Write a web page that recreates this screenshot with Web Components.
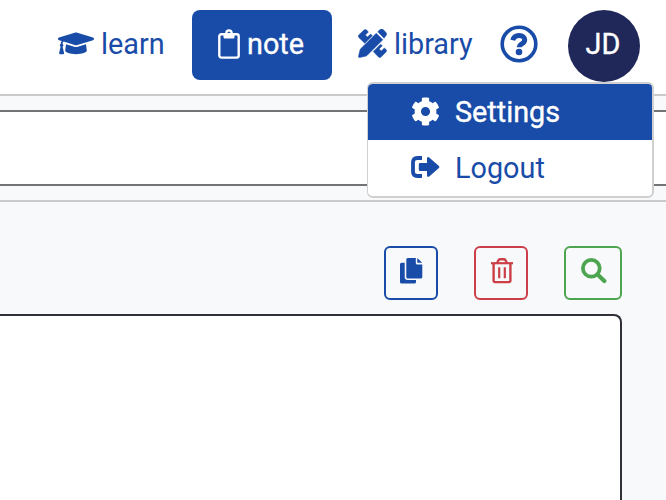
<!DOCTYPE html>
<html lang="en"><head><meta charset="utf-8"><title>Notes</title>
<style>html,body{margin:0;height:100%;overflow:hidden}body{font-family:Roboto,"Liberation Sans",sans-serif}</style>
</head><body>
<note-app></note-app>
<script>
const icons = {
  cap: ['0 0 640 512', '<path d="M622.34 153.2L343.4 67.5c-15.2-4.67-31.6-4.67-46.79 0L17.66 153.2c-23.54 7.23-23.54 38.36 0 45.59l48.63 14.94c-10.67 13.19-17.23 29.28-17.88 46.9C38.78 266.15 32 276.11 32 288c0 10.78 5.68 19.85 13.86 25.65L20.33 428.53C18.11 438.52 25.71 448 35.94 448h56.11c10.24 0 17.84-9.48 15.62-19.47L82.14 313.65C90.32 307.85 96 298.78 96 288c0-11.57-6.47-21.25-15.66-26.87.76-15.02 8.44-28.3 20.69-36.72L296.6 284.5c9.06 2.78 26.44 6.25 46.79 0l278.95-85.7c23.55-7.24 23.55-38.36 0-45.6zM352.79 315.09c-28.53 8.76-52.84 3.92-65.59 0l-145.02-44.55L128 384c0 35.35 85.96 64 192 64s192-28.65 192-64l-14.18-113.47-145.03 44.56z"/>'],
  clipboard: ['0 0 22 30', '<rect x="1.3" y="5.2" width="19.4" height="23.4" rx="2" fill="none" stroke="currentColor" stroke-width="2.4"/><path fill-rule="evenodd" d="M5.5 4H7.2a3.8 3.8 0 0 1 7.6 0h1.7v4.2q0 1.2-1.2 1.2H6.7q-1.2 0-1.2-1.2zM11 2.6a1.5 1.5 0 1 0 0 3A1.5 1.5 0 1 0 11 2.6z"/>'],
  tools: ['0 0 30 30', '<g stroke="currentColor" stroke-width=".5"><path d="M.8 6.3L6.1 1.1q1.4-1.2 2.8 0l1.9 1.9L7.6 6.2l2.2 2.2 3.2-3.2 1.8 1.8L7 14.7 .8 8.7q-1-1.2 0-2.4zM15.8 23.3l7.6-7.6 1.7 1.7-3.2 3.2 2.2 2.2 3.2-3.2 1.7 1.7q1.2 1.3 0 2.5l-5.2 5.2q-1.3 1.1-2.6 0z"/><path d="M18.9 4.3l6.8 6.8L9.8 27q-.8.8-2 1.1L1.7 29.5Q.2 29.7.5 28.3L1.9 22.3q.3-1.2 1.1-2zM20.4 2.9L22.8.6q1.6-1.3 3.2 0l3 3q1.3 1.6 0 3.2l-2.1 2.7z"/></g>'],
  help: ['0 0 38 38', '<circle cx="19" cy="19" r="16.8" fill="none" stroke="currentColor" stroke-width="3.6"/><path d="M12.9 15.2c.7-3.5 3-4.7 6.3-4.7 3.2 0 5.5 1.8 5.5 4.3 0 2.9-2.1 3.6-3.6 4.6-1.3.8-2 1.2-2 2.9" fill="none" stroke="currentColor" stroke-width="5"/><circle cx="19" cy="27" r="3.3"/>'],
  cog: ['0 0 512 512', '<path d="M487.4 315.7l-42.6-24.6c4.3-23.2 4.3-47 0-70.2l42.6-24.6c4.9-2.8 7.1-8.6 5.5-14-11.1-35.6-30-67.8-54.7-94.6-3.8-4.1-10-5.1-14.8-2.3L380.8 110c-17.9-15.4-38.5-27.3-60.8-35.1V25.8c0-5.6-3.9-10.5-9.4-11.7-36.7-8.2-74.3-7.8-109.2 0-5.5 1.2-9.4 6.1-9.4 11.7V75c-22.2 7.9-42.8 19.8-60.8 35.1L88.7 85.5c-4.9-2.8-11-1.9-14.8 2.3-24.7 26.7-43.6 58.9-54.7 94.6-1.7 5.4.6 11.2 5.5 14L67.3 221c-4.3 23.2-4.3 47 0 70.2l-42.6 24.6c-4.9 2.8-7.1 8.6-5.5 14 11.1 35.6 30 67.8 54.7 94.6 3.8 4.1 10 5.1 14.8 2.3l42.6-24.6c17.9 15.4 38.5 27.3 60.8 35.1v49.2c0 5.6 3.9 10.5 9.4 11.7 36.7 8.2 74.3 7.8 109.2 0 5.5-1.2 9.4-6.1 9.4-11.7v-49.2c22.2-7.9 42.8-19.8 60.8-35.1l42.6 24.6c4.9 2.8 11 1.9 14.8-2.3 24.7-26.7 43.6-58.9 54.7-94.6 1.5-5.5-.7-11.3-5.6-14.1zM256 336c-44.1 0-80-35.9-80-80s35.9-80 80-80 80 35.9 80 80-35.9 80-80 80z"/>'],
  logout: ['0 0 30 22', '<path d="M11 2H6.2Q2 2 2 6.2v9.6Q2 20 6.2 20H11" fill="none" stroke="currentColor" stroke-width="3.8"/><path d="M9 7h7V2.4Q16.3.2 18.2 1.4l9.7 8.5q1.2 1.1 0 2.2l-9.7 8.5q-1.9 1.2-2.2-1V15H9q-1.2 0-1.2-1.2V8.2Q7.8 7 9 7z"/>'],
  copy: ['0 0 23 26', '<path d="M1.5 4.8h3.2v14.3q0 2.9 2.9 2.9H16v1.9q0 1.6-1.6 1.6H1.6Q0 25.5 0 23.9V6.3q0-1.5 1.5-1.5zM7.8 0h8v5q0 1.5 1.5 1.5h5v12.6q0 1.5-1.5 1.5h-13q-1.5 0-1.5-1.5V1.5Q6.3 0 7.8 0zM17.3 0l4.9 4.8h-4.9z"/>'],
  trash: ['0 0 22 26', '<g fill="none" stroke="currentColor"><path d="M0 5.2h22" stroke-width="2.2"/><path d="M2.6 6v16.6q0 1.5 1.5 1.5h13.8q1.5 0 1.5-1.5V6M6 5.5l1.3-3Q7.8 1.3 9 1.3h4q1.2 0 1.7 1.2l1.3 3" stroke-width="2.4"/><path d="M8.2 9.2v11M13.8 9.2v11" stroke-width="2.2"/></g>'],
  search: ['0 0 26 26', '<circle cx="10.3" cy="10.3" r="8.4" fill="none" stroke="currentColor" stroke-width="3.8"/><path d="M16.6 16.6l6.7 6.5" fill="none" stroke="currentColor" stroke-width="4.2" stroke-linecap="round"/>']
};
const component = (name, render) => customElements.define(name, class extends HTMLElement {
  connectedCallback() {
    if (!this.shadowRoot) this.attachShadow({ mode: 'open' }).innerHTML = render(this);
  }
});
component('ui-icon', el => {
  const [box, art] = icons[el.getAttribute('name')];
  return `<style>:host{display:block;flex:none;width:var(--w);height:var(--h)}svg{display:block;width:100%;height:100%;fill:currentColor}</style><svg viewBox="${box}" aria-hidden="true">${art}</svg>`;
});
component('nav-item', () => `<style>
  :host{display:flex;align-items:center;box-sizing:border-box;height:70px;color:#194ca8;font-size:28.8px;line-height:34px;white-space:nowrap;gap:7px}
  :host([active]){width:140px;padding-left:26px;background:#194ca8;color:#fff;border-radius:8px;-webkit-text-stroke:.35px currentColor}
  span{margin-top:-2px}
  </style><slot name="icon"></slot><span><slot></slot></span>`);
component('user-avatar', () => `<style>:host{display:flex;align-items:center;justify-content:center;width:72px;height:72px;border-radius:50%;background:#1f2859;color:#fff;font-size:28.8px;line-height:34px;-webkit-text-stroke:.35px currentColor}span{margin-top:-4px;margin-left:-2px}</style><span><slot></slot></span>`);
component('menu-item', () => `<style>
  :host{display:grid;grid-template-columns:29px auto;column-gap:15px;align-items:center;height:56px;box-sizing:border-box;padding-left:43px;color:#194ca8;font-size:28.8px;line-height:34px}
  :host([active]){background:#194ca8;color:#fff;-webkit-text-stroke:.35px currentColor}</style><slot name="icon"></slot><span><slot></slot></span>`);
component('user-menu', () => `<style>:host{display:block;box-sizing:border-box;width:287px;height:116px;background:#fff;border:2px solid #d0d0d1;border-left-width:1px;border-radius:6px;overflow:hidden}</style><slot></slot>`);
component('tool-button', () => `<style>:host{display:flex;justify-content:center;box-sizing:border-box;width:54px;height:54px;border:2px solid currentColor;border-radius:6px;padding-top:10px}</style><slot></slot>`);
component('app-header', () => `<style>
  :host{display:flex;align-items:flex-start;box-sizing:border-box;height:96px;padding:10px 0 0 58px;background:#fff;border-bottom:2px solid #cacaca}
  .learn{width:134px}.library{padding-left:26px;width:168px}.help{width:68px}
  </style>
  <nav-item class="learn"><ui-icon slot="icon" name="cap" style="--w:36px;--h:28.8px;margin-top:-4px"></ui-icon>learn</nav-item>
  <nav-item active><ui-icon slot="icon" name="clipboard" style="--w:22px;--h:30px;margin-top:-3px"></ui-icon>note</nav-item>
  <nav-item class="library"><ui-icon slot="icon" name="tools" style="--w:29px;--h:29px;margin-top:-3px"></ui-icon>library</nav-item>
  <nav-item class="help"><ui-icon slot="icon" name="help" style="--w:38px;--h:38px;margin-top:-3px"></ui-icon></nav-item>
  <user-avatar>JD</user-avatar>`);
component('note-app', () => `<style>
  :host{display:flex;flex-direction:column;height:100vh;background:#f8f9fb;overflow:hidden}
  .title{box-sizing:border-box;height:106px;padding:14px 0;border-bottom:2px solid #cacaca}
  .field{box-sizing:border-box;height:76px;background:#fff;border:2px solid #747474;border-width:2px 0}
  .tools{display:flex;justify-content:flex-end;gap:36px;padding:44px 44px 14px 0}
  .editor{flex:1;margin-right:44px;background:#fff;border:2px solid #303038;border-width:2px 2px 0 0;border-radius:0 8px 0 0}
  user-menu{position:absolute;top:82px;left:367px}
  </style>
  <app-header></app-header>
  <div class="title"><div class="field"></div></div>
  <div class="tools">
    <tool-button style="color:#194ca8"><ui-icon name="copy" style="--w:23px;--h:26px"></ui-icon></tool-button>
    <tool-button style="color:#cb4048"><ui-icon name="trash" style="--w:22px;--h:26px;margin-left:1px"></ui-icon></tool-button>
    <tool-button style="color:#4da64f;width:58px"><ui-icon name="search" style="--w:26px;--h:26px;margin-left:2px"></ui-icon></tool-button>
  </div>
  <div class="editor"></div>
  <user-menu>
    <menu-item active><ui-icon slot="icon" name="cog" style="--w:29px;--h:29px;margin-top:-2px"></ui-icon>Settings</menu-item>
    <menu-item><ui-icon slot="icon" name="logout" style="--w:30px;--h:22px;margin-top:-2px"></ui-icon>Logout</menu-item>
  </user-menu>`);
</script></body></html>
